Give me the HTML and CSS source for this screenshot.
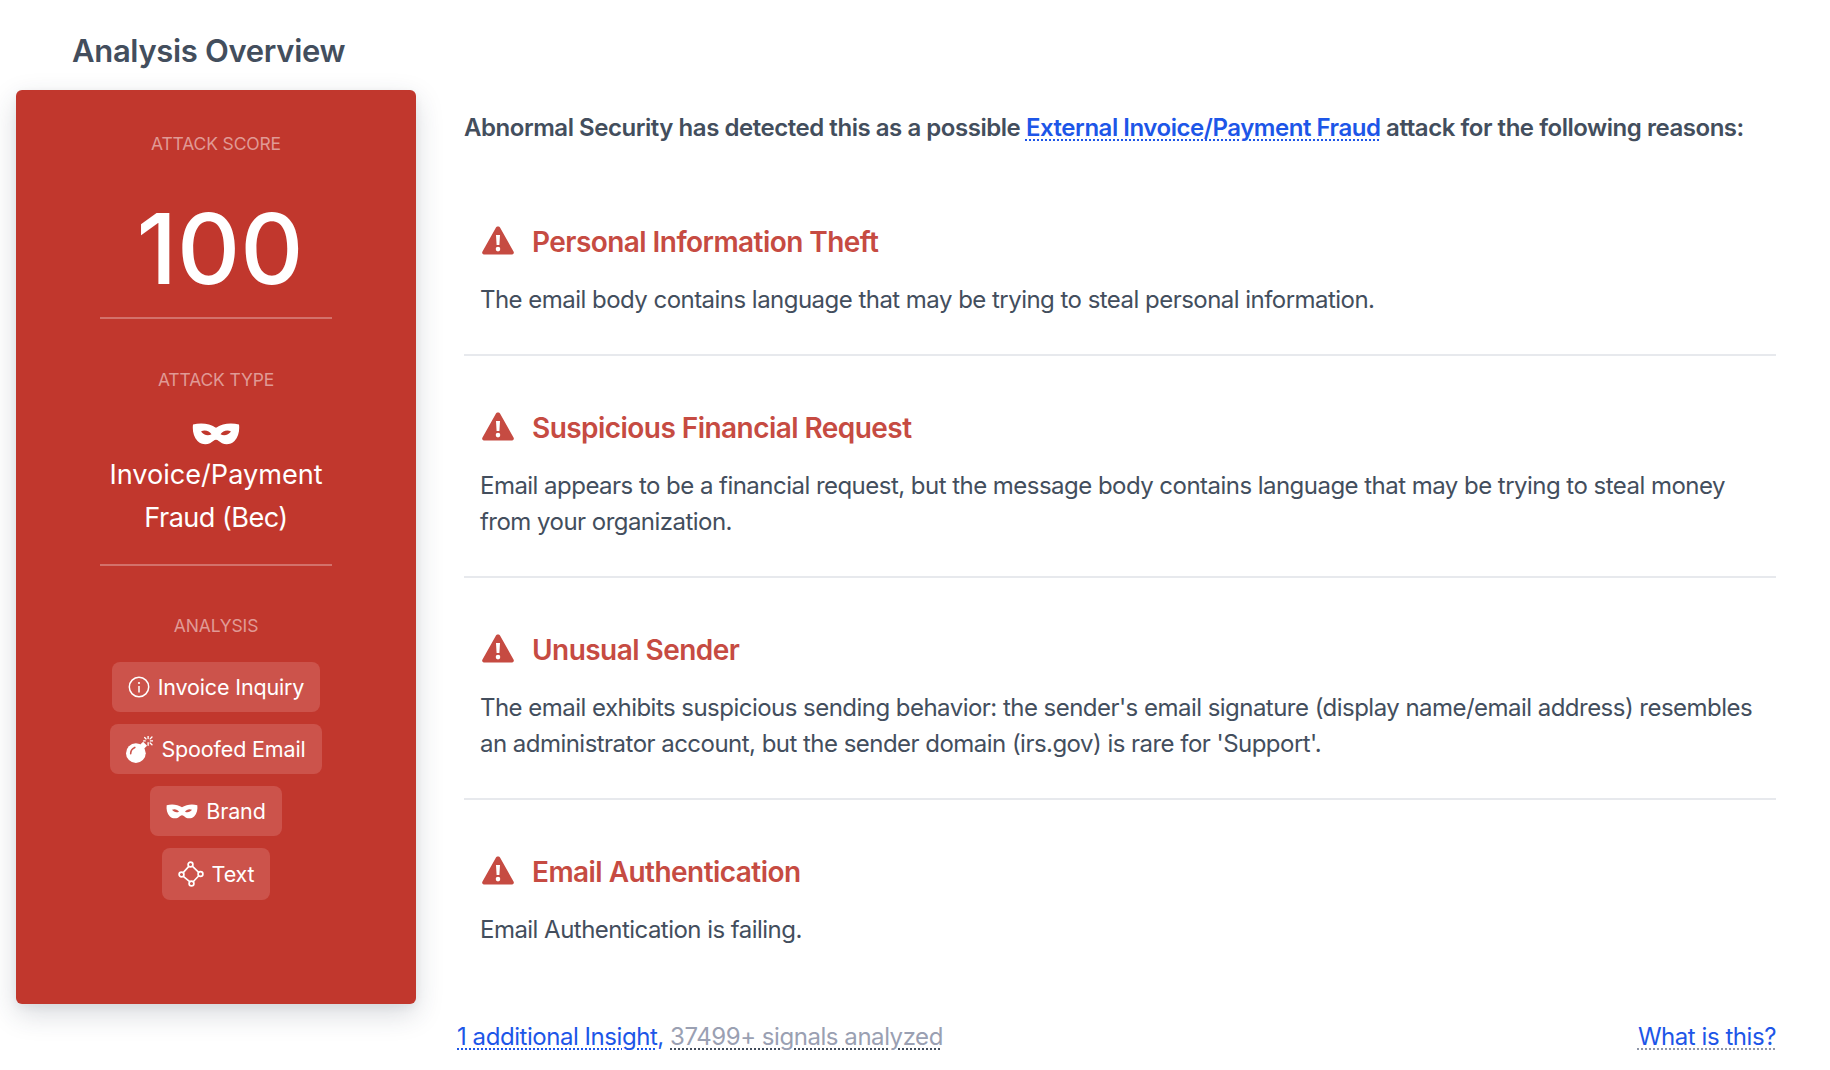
FILE: index.html
```html
<!DOCTYPE html>
<html lang="en">
<head>
<meta charset="utf-8">
<title>Analysis Overview</title>
<link rel="stylesheet" href="styles.css">
</head>
<body>
<svg class="defs" width="0" height="0" aria-hidden="true">
  <defs>
    <symbol id="mask" viewBox="0 0 48 22">
      <path fill="currentColor" fill-rule="evenodd" d="M1 1.500C6 .2 12 0 17 1.600c3 1 5.200 2.200 7 3.100 1.800-.9 4-2.100 7-3.100C36 0 42 .2 47 1.500c.8 6-.6 12.500-4.500 16.500-3.500 3.500-8.500 4.200-12.500 2.200-2.600-1.300-4.200-3.400-6-3.400s-3.400 2.100-6 3.400C14 22.200 9 21.500 5.500 18 1.600 14 .2 7.500 1 1.500zM9 8.500c2.500 3.600 7 4.700 10.500 2.800-2-3.400-7-5-10.500-2.800zm30 0c-2.500 3.600-7 4.700-10.500 2.800 2-3.400 7-5 10.500-2.800z"/>
    </symbol>
    <symbol id="warn" viewBox="0 0 32 28">
      <path fill="currentColor" fill-rule="evenodd" d="M13.700 1.400c1-1.800 3.600-1.800 4.600 0l13.200 23.600c1 1.800-.3 3-2.300 3H2.800c-2 0-3.300-1.200-2.300-3zM14 8.500l.6 10h2.800l.6-10zM16 20.300a2.300 2.300 0 1 0 0 4.600 2.300 2.300 0 0 0 0-4.600z"/>
    </symbol>
  </defs>
</svg>
<main class="page">
  <h1 class="page-title">Analysis Overview</h1>
  <div class="columns">
    <aside class="score-card">
      <div class="label label-score">ATTACK SCORE</div>
      <div class="score">100</div>
      <hr class="rule">
      <div class="label label-type">ATTACK TYPE</div>
      <svg class="type-icon"><use href="#mask"/></svg>
      <div class="type-name">Invoice/Payment<br><span class="type-line-two">Fraud (Bec)</span></div>
      <hr class="rule">
      <div class="label label-analysis">ANALYSIS</div>
      <div class="chips">
        <div class="chip">
          <svg class="chip-icon" viewBox="0 0 22 22"><circle cx="11" cy="11" r="9.700" fill="none" stroke="currentColor" stroke-width="1.500"/><path d="M11 10v6.500" stroke="currentColor" stroke-width="1.500"/><circle cx="11" cy="7" r="1.100" fill="currentColor"/></svg>
          Invoice Inquiry
        </div>
        <div class="chip">
          <svg class="chip-icon chip-icon-bomb" viewBox="0 0 26 26"><circle cx="9.500" cy="16.500" r="9.500" fill="currentColor"/><path d="M13.500 8.500l3-3 3.800 3.800-3 3z" fill="currentColor"/><path d="M4.500 17c0-3 1.500-5 4-6" fill="none" stroke="#cc534b" stroke-width="1.500" stroke-linecap="round"/><path d="M21.300 0v2.500M21.300 6.500v2.500M25.800 4.700h-2.300M17 4.700h1.500M18 1.500l1.300 1.300M25 1l-1.700 1.800M25 8.500l-1.700-1.700" stroke="currentColor" stroke-width="1.300" stroke-linecap="round"/></svg>
          Spoofed Email
        </div>
        <div class="chip">
          <svg class="chip-icon chip-icon-mask"><use href="#mask"/></svg>
          Brand
        </div>
        <div class="chip">
          <svg class="chip-icon chip-icon-graph" viewBox="0 0 26 26"><path d="M10.800 5.400l-5.600 6.200M14.300 5.200l6.400 6.100M20.800 14.800l-5.600 5.900M11.700 20.700l-6.400-5.400" stroke="currentColor" stroke-width="1.600"/><g fill="none" stroke="currentColor" stroke-width="1.700"><circle cx="12.500" cy="3.500" r="2.400"/><circle cx="3.500" cy="13.500" r="2.400"/><circle cx="22.500" cy="13" r="2.400"/><circle cx="13.500" cy="22.500" r="2.400"/></g></svg>
          Text
        </div>
      </div>
    </aside>
    <section class="details">
      <p class="intro">Abnormal Security has detected this as a possible <a class="intro-link" href="#">External Invoice/Payment Fraud</a> attack for the following reasons:</p>
      <article class="reason reason-first">
        <h2 class="reason-title"><svg class="warn"><use href="#warn"/></svg>Personal Information Theft</h2>
        <p class="reason-text">The email body contains language that may be trying to steal personal information.</p>
      </article>
      <article class="reason">
        <h2 class="reason-title"><svg class="warn"><use href="#warn"/></svg>Suspicious Financial Request</h2>
        <p class="reason-text">Email appears to be a financial request, but the message body contains language that may be trying to steal money from your organization.</p>
      </article>
      <article class="reason">
        <h2 class="reason-title"><svg class="warn"><use href="#warn"/></svg>Unusual Sender</h2>
        <p class="reason-text">The email exhibits suspicious sending behavior: the sender's email signature (display name/email address) resembles an administrator account, but the sender domain (irs.gov) is rare for 'Support'.</p>
      </article>
      <article class="reason reason-last">
        <h2 class="reason-title"><svg class="warn"><use href="#warn"/></svg>Email Authentication</h2>
        <p class="reason-text">Email Authentication is failing.</p>
      </article>
      <footer class="foot">
        <div class="foot-left"><a class="foot-link" href="#">1 additional Insight,</a> <span class="foot-muted">37499+ signals analyzed</span></div>
        <a class="foot-link foot-what" href="#">What is this?</a>
      </footer>
    </section>
  </div>
</main>
</body>
</html>
```

FILE: styles.css
```css
* { box-sizing: border-box; }
html, body { margin: 0; padding: 0; background: #fff; }
body { font-family: Inter, "Liberation Sans", sans-serif; color: #434e5d; height: 1070px; overflow: hidden; }
.defs { position: absolute; }
.page { padding: 28px 54px 0 16px; }
.page-title { margin: 0 0 16px 56px; font-size: 31px; line-height: 46px; font-weight: 600; color: #434e5d; letter-spacing: -0.32px; }
.columns { display: flex; align-items: flex-start; gap: 48px; }
.score-card { width: 400px; height: 914px; flex: none; background: #c1372d; border-radius: 6px; box-shadow: 0 10px 28px rgba(40, 50, 70, .18), 0 3px 8px rgba(40, 50, 70, .06); display: flex; flex-direction: column; align-items: center; color: #fff; }
.label { font-size: 17.500px; line-height: 24px; color: #e09a95; letter-spacing: -0.15px; }
.label-score { margin-top: 42px; }
.score { margin-top: 37px; padding-left: 8px; font-size: 98px; line-height: 112px; font-weight: 500; color: #fff; }
.rule { width: 232px; height: 2px; margin: 12px 0 0; border: 0; background: #d3716a; }
.label-type { margin-top: 49px; }
.type-icon { width: 48px; height: 22px; margin-top: 31px; color: #fff; }
.type-name { margin-top: 8px; font-size: 27.100px; line-height: 43px; text-align: center; color: #fff; }
.type-line-two { letter-spacing: -0.55px; }
.type-name + .rule { margin-top: 25px; }
.label-analysis { margin-top: 48px; }
.chips { margin-top: 24px; display: flex; flex-direction: column; align-items: center; gap: 12px; }
.chip { display: flex; align-items: center; gap: 8px; height: 50px; padding: 0 16px; background: #cc534b; border-radius: 8px; font-size: 21.500px; letter-spacing: -0.15px; color: #fff; white-space: nowrap; }
.chip:last-child { height: 52px; }
.chip-icon { width: 22px; height: 22px; flex: none; }
.chip-icon-bomb { width: 27px; height: 27px; }
.chip-icon-mask { width: 32px; height: 15px; }
.chip-icon-graph { width: 26px; height: 26px; }
.details { flex: 1; min-width: 0; padding-top: 20px; }
.intro { margin: 0; font-size: 24px; line-height: 36px; font-weight: 600; color: #434e5d; white-space: nowrap; letter-spacing: -0.46px; }
.intro-link { color: #1d56e8; text-decoration: underline dotted #1d56e8 2px; text-underline-offset: 3px; }
.reason { padding: 54px 16px 36px; border-bottom: 2px solid #e7e9ed; }
.reason-first { padding-top: 78px; }
.reason-last { border-bottom: 0; padding-bottom: 0; }
.reason-title { display: flex; align-items: center; margin: 0 0 22px; font-size: 28px; line-height: 36px; font-weight: 600; color: #c64b42; letter-spacing: -0.55px; }
.warn { width: 32px; height: 29px; margin: -4px 18px 0 2px; color: #c64b42; flex: none; }
.reason-text { margin: 0; font-size: 24px; line-height: 36px; color: #434e5d; letter-spacing: -0.53px; }
.foot { display: flex; justify-content: space-between; margin-top: 71px; font-size: 24px; line-height: 36px; letter-spacing: -0.45px; }
.foot-left { margin-left: -7px; }
.foot-link { color: #1d56e8; text-decoration: underline dotted #8f96a8 2px; text-underline-offset: 3px; }
.foot-left .foot-link { text-decoration-color: #1d56e8; }
.foot-muted { color: #9aa0b2; text-decoration: underline dotted #424d5c 2px; text-underline-offset: 3px; }
```
